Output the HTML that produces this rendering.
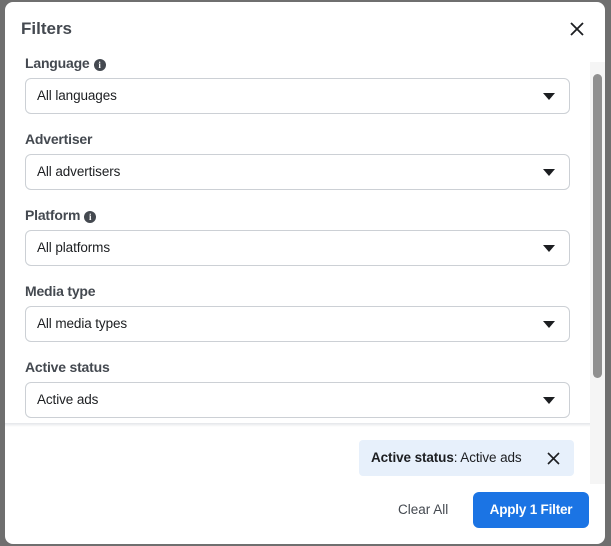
<!DOCTYPE html>
<html><head><style>
body{margin:0;width:611px;height:546px;background:#6f6f6f;font-family:"Liberation Sans",sans-serif;position:relative;overflow:hidden;color:#1c1e21}
.modal{position:absolute;left:5px;top:2px;width:600px;height:542px;background:#fff;border-radius:8px;overflow:hidden}
.t{position:absolute;left:16px;top:17px;font-size:17px;font-weight:bold;color:#444950}
.x{position:absolute;left:564px;top:19px}
.lab{position:absolute;left:20px;font-size:14px;font-weight:bold;color:#444950;letter-spacing:-0.2px}
.sel{position:absolute;left:20px;width:543px;height:34px;border:1px solid #ccd0d5;border-radius:6px;font-size:13.5px;color:#1c1e21;line-height:34px;text-indent:11px;box-sizing:content-box;letter-spacing:-0.1px}
.sel:after{content:"";position:absolute;right:14px;top:14px;border-left:6px solid transparent;border-right:6px solid transparent;border-top:7px solid #1c1e21}
.info{display:inline-block;width:12px;height:12px;border-radius:50%;background:#444950;color:#fff;font-size:9px;text-align:center;line-height:12px;vertical-align:0px;margin-left:4px;font-family:"Liberation Serif",serif;font-weight:bold}
.track{position:absolute;left:585px;top:60px;width:15px;height:422px;background:#f5f5f5}
.thumb{position:absolute;left:588px;top:72px;width:9px;height:304px;background:#909090;border-radius:5px}
.foot{position:absolute;left:0;top:421px;width:585px;height:4px;background:linear-gradient(#e4e6e9,#fff)}
.chip{position:absolute;left:354px;top:438px;width:215px;height:36px;background:#e7f0fb;border-radius:4px;font-size:13.5px;line-height:36px;text-indent:12px;letter-spacing:-0.1px}
.btn{position:absolute;left:468px;top:490px;width:116px;height:36px;background:#1b74e4;border-radius:6px;color:#fff;font-weight:bold;font-size:13.5px;text-align:center;line-height:36px;letter-spacing:-0.2px}
.clr{position:absolute;left:393px;top:500px;font-size:13.5px;color:#444950}
</style></head><body>
<div class="modal">
<div class="t">Filters</div>
<svg class="x" width="16" height="16" viewBox="0 0 16 16"><path d="M2 2L14 14M14 2L2 14" stroke="#1c1e21" stroke-width="1.8"/></svg>
<div class="lab" style="top:53px">Language<span class="info">i</span></div>
<div class="sel" style="top:76px">All languages</div>
<div class="lab" style="top:129px">Advertiser</div>
<div class="sel" style="top:152px">All advertisers</div>
<div class="lab" style="top:205px">Platform<span class="info">i</span></div>
<div class="sel" style="top:228px">All platforms</div>
<div class="lab" style="top:281px">Media type</div>
<div class="sel" style="top:304px">All media types</div>
<div class="lab" style="top:357px">Active status</div>
<div class="sel" style="top:380px">Active ads</div>
<div class="track"></div><div class="thumb"></div>
<div class="foot"></div>
<div style="position:absolute;left:0;top:425px;width:585px;height:60px;background:#fff"></div>
<div class="chip"><b>Active status</b>: Active ads
<svg style="position:absolute;left:188px;top:12px" width="13" height="13" viewBox="0 0 13 13"><path d="M1 1L12 12M12 1L1 12" stroke="#1c1e21" stroke-width="1.6"/></svg></div>
<div class="clr">Clear All</div>
<div class="btn">Apply 1 Filter</div>
</div>
</body></html>
